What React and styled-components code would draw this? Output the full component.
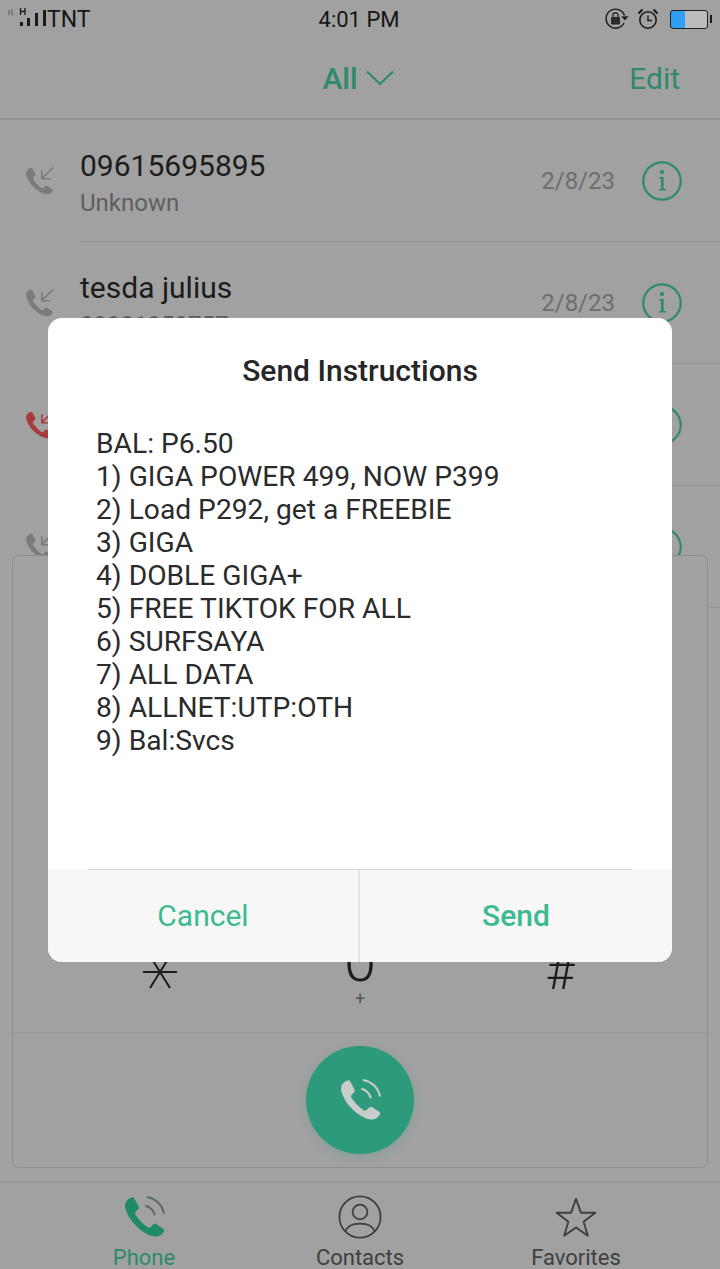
import React from "react";
import styled, { createGlobalStyle } from "styled-components";

const dimGreen = "#2d8a6c";
const GlobalStyle = createGlobalStyle`
  html, body { margin: 0; padding: 0; background: #a1a1a1; }
  * { box-sizing: border-box; }
`;

const Screen = styled.div`
  width: 720px;
  height: 1269px;
  position: relative;
  overflow: hidden;
  background: #a1a1a1;
  font-family: Roboto, "Liberation Sans", sans-serif;
  color: #1c1c1c;
  display: flex;
  flex-direction: column;
`;

// status bar
const StatusBar = styled.div`
  height: 38px;
  padding: 0 12px 0 8px;
  display: grid;
  grid-template-columns: 1fr auto 1fr;
  align-items: center;
`;
const Carrier = styled.div`
  display: flex;
  align-items: center;
  font-size: 23px;
  color: #151515;
  gap: 1px;
`;
const Clock = styled.div`
  font-size: 22px;
  color: #151515;
  padding-left: 2px;
`;
const StatusIcons = styled.div`
  display: flex;
  align-items: center;
  justify-content: flex-end;
  gap: 7px;
`;
const Battery = styled.div`
  width: 38px;
  height: 19px;
  margin-left: 4px;
  border: 1.5px solid #1e1e1e;
  border-radius: 3px;
  background: linear-gradient(to right, #2e9ff2 0 39%, #bcbcbc 39% 100%);
  position: relative;
  &::after {
    content: "";
    position: absolute;
    right: -5px;
    top: 4px;
    width: 2px;
    height: 8px;
    background: #1e1e1e;
  }
`;

// title bar
const Header = styled.header`
  height: 82px;
  border-bottom: 2px solid #909090;
  display: grid;
  grid-template-columns: 1fr auto 1fr;
  align-items: center;
  padding: 0 40px;
  color: ${dimGreen};
`;
const FilterTitle = styled.div`
  grid-column: 2;
  display: flex;
  align-items: center;
  gap: 8px;
  font-size: 30px;
  font-weight: 500;
  margin-right: 4px;
`;
const EditLink = styled.div`
  font-size: 30px;
  text-align: right;
`;

// call log
const CallRow = styled.div`
  height: 122px;
  flex: none;
  display: grid;
  grid-template-columns: 80px 1fr auto;
  align-items: center;
  position: relative;
  &::after {
    content: "";
    position: absolute;
    left: 80px;
    right: 0;
    bottom: 0;
    height: 1px;
    background: #929292;
  }
`;
const CallIcon = styled.div`
  padding-left: 22px;
  display: flex;
`;
const CallText = styled.div`
  display: flex;
  flex-direction: column;
  gap: 4px;
  padding-top: 3px;
`;
const CallName = styled.div`
  font-size: 30px;
  line-height: 36px;
  color: #1c1c1c;
`;
const CallSub = styled.div`
  font-size: 24px;
  line-height: 30px;
  color: #5f5f5f;
`;
const CallSide = styled.div`
  display: flex;
  align-items: center;
  gap: 27px;
  padding-right: 38px;
  font-size: 24px;
  color: #6e6e6e;
`;

// dial pad, lies over the log
const DialPanel = styled.div`
  position: absolute;
  left: 12px;
  right: 12px;
  top: 555px;
  height: 613px;
  border: 1px solid #8e8e8e;
  border-radius: 7px;
  background: #a1a1a1;
  display: flex;
  flex-direction: column;
`;
const KeyGrid = styled.div`
  height: 477px;
  display: grid;
  grid-template-columns: repeat(3, 200px);
  grid-template-rows: 119px;
  align-content: end;
  padding: 0 47px;
  border-bottom: 1px solid #999;
`;
const Key = styled.div`
  display: flex;
  flex-direction: column;
  align-items: center;
  justify-content: flex-end;
  height: 100%;
  padding-bottom: ${(p) => p.$pad || 24}px;
  font-size: ${(p) => p.$size || 58}px;
  font-weight: 300;
  line-height: ${(p) => p.$size || 58}px;
  color: #1c1c1c;
`;
const KeySub = styled.span`
  font-size: 18px;
  line-height: 18px;
  font-weight: 400;
  color: #555;
`;
const CallArea = styled.div`
  flex: 1;
  display: flex;
  align-items: center;
  justify-content: center;
`;
const CallButton = styled.div`
  width: 108px;
  height: 108px;
  border-radius: 50%;
  background: #2c9a7b;
  box-shadow: 0 3px 8px rgba(46, 156, 126, 0.25);
  display: flex;
  align-items: center;
  justify-content: center;
`;

// bottom tabs
const TabBar = styled.nav`
  position: absolute;
  left: 0;
  right: 0;
  bottom: 0;
  height: 88px;
  border-top: 2px solid #979797;
  padding: 0 36px;
  display: grid;
  grid-template-columns: repeat(3, 216px);
  background: #a1a1a1;
`;
const Tab = styled.div`
  display: flex;
  flex-direction: column;
  align-items: center;
  padding-top: 11px;
  color: ${(p) => (p.$active ? dimGreen : "#3f3f3f")};
  font-size: 22px;
  line-height: 26px;
`;
const TabIcon = styled.div`
  height: 46px;
  margin-bottom: 5px;
  display: flex;
  align-items: center;
`;

// dialog
const Scrim = styled.div`
  position: absolute;
  inset: 0;
  padding-top: 318px;
  display: flex;
  justify-content: center;
  align-items: flex-start;
`;
const Dialog = styled.div`
  width: 624px;
  height: 644px;
  border-radius: 14px;
  overflow: hidden;
  background: #fff;
  display: flex;
  flex-direction: column;
`;
const DialogTitle = styled.h2`
  margin: 0;
  padding-top: 33px;
  font-size: 30px;
  line-height: 40px;
  font-weight: 500;
  text-align: center;
  color: #262626;
`;
const DialogBody = styled.div`
  flex: 1;
  padding: 36px 48px 0;
  font-size: 28.2px;
  line-height: 33px;
  color: #2b2b2b;
`;
const DialogFooter = styled.footer`
  height: 93px;
  display: grid;
  grid-template-columns: 1fr 1fr;
  background: #f7f7f7;
  position: relative;
  &::before {
    content: "";
    position: absolute;
    left: 40px;
    right: 40px;
    top: 0;
    height: 1px;
    background: #d6d6d6;
  }
`;
const DialogButton = styled.div`
  display: flex;
  align-items: center;
  justify-content: center;
  font-size: 30px;
  color: #3dba90;
  font-weight: ${(p) => (p.$primary ? 500 : 400)};
  &:first-child {
    border-right: 2px solid #e4e4e4;
  }
`;

const handset =
  "M6.2 2.6C5 2.9 3.4 4 3 5.6 2.5 8 4.6 12.4 7.6 15.6c3 3.3 7.4 6 10.4 5.8 1.6-.1 3-1.4 3.6-2.6.2-.5 0-.9-.4-1.2l-3.4-2.2c-.5-.3-1-.2-1.4.2l-1.2 1.2c-.4.4-.9.4-1.4.1-2.2-1.4-4.6-3.9-5.9-6.1-.3-.5-.2-1 .2-1.4l1.1-1.1c.4-.4.4-.9.2-1.3l-2-3.8c-.3-.5-.7-.7-1.2-.6z";

function IncomingIcon({ color = "#7b7b7b" }) {
  return (
    <svg width="34" height="34" viewBox="0 0 24 24">
      <path d={handset} fill={color} />
      <path d="M22 2.4l-7.6 7.4M14 4.4v6h6.2" fill="none" stroke={color} strokeWidth="1.1" />
    </svg>
  );
}

function WavePhone({ size, color, wave = color }) {
  return (
    <svg width={size} height={size} viewBox="0 0 24 24">
      <path d={handset} fill={color} />
      <path d="M12.6 6.6c2.2.5 4 2.2 4.6 4.6M13.4 2.4c4.2.7 7.4 3.8 8.2 8" fill="none" stroke={wave} strokeWidth="1" />
    </svg>
  );
}

function InfoIcon() {
  return (
    <svg width="40" height="40" viewBox="0 0 40 40">
      <circle cx="20" cy="20" r="18.7" fill="none" stroke={dimGreen} strokeWidth="2.2" />
      <circle cx="20" cy="11" r="2.1" fill={dimGreen} />
      <path d="M17 16h4.6v12H24v1.6h-7V28h2V17.6h-2z" fill={dimGreen} />
    </svg>
  );
}

function SignalIcon() {
  return (
    <svg width="38" height="24" viewBox="0 0 38 24">
      <path d="M1 3v5M4 2.5v6" stroke="#6f6f6f" strokeWidth="1.5" />
      <path d="M12.5 1v7M12.5 4.5h4.5M17 1v7" stroke="#1a1a1a" strokeWidth="1.3" fill="none" />
      <rect x="12" y="15" width="3" height="4" fill="#1a1a1a" />
      <rect x="19" y="11" width="3" height="8" fill="#1a1a1a" />
      <rect x="27" y="6" width="3" height="13" fill="#1a1a1a" />
      <rect x="35" y="3" width="3" height="16" fill="#1a1a1a" />
    </svg>
  );
}

function LockRotateIcon() {
  return (
    <svg width="25" height="22" viewBox="0 0 25 22">
      <path d="M19.5 7.5A9.5 9.5 0 1 0 19 15" fill="none" stroke="#1a1a1a" strokeWidth="1.4" />
      <path d="M16 8.5l7.5-.2-3.5 4z" fill="#1a1a1a" />
      <rect x="6" y="9" width="9" height="7.5" rx="1" fill="#2a2a2a" />
      <path d="M8 9V7.2a2.5 2.5 0 0 1 5 0V9" fill="none" stroke="#2a2a2a" strokeWidth="1.4" />
    </svg>
  );
}

function AlarmIcon() {
  return (
    <svg width="22" height="22" viewBox="0 0 22 22">
      <circle cx="11" cy="12" r="8.2" fill="none" stroke="#1a1a1a" strokeWidth="1.6" />
      <path d="M11 7.5V12.5H15" fill="none" stroke="#1a1a1a" strokeWidth="1.4" />
      <path d="M1.5 5.5L5.5 1.5 M16.5 1.5L20.5 5.5" stroke="#1a1a1a" strokeWidth="2.2" />
    </svg>
  );
}

function AsteriskIcon() {
  return (
    <svg width="34" height="34" viewBox="0 0 34 34">
      <path d="M0 17h34M7 1l20 32M27 1L7 33" fill="none" stroke="#1c1c1c" strokeWidth="2" />
    </svg>
  );
}

function ContactIcon() {
  return (
    <svg width="44" height="44" viewBox="0 0 44 44" fill="none" stroke="#3f3f3f" strokeWidth="1.8">
      <circle cx="22" cy="22" r="20.6" />
      <circle cx="22" cy="17" r="7.4" />
      <path d="M7.6 36.6C9 31 15 28.6 22 28.6s13 2.4 14.4 8" />
    </svg>
  );
}

function StarIcon() {
  return (
    <svg width="42" height="40" viewBox="0 0 44 42">
      <path
        d="M22 2l5.3 14.6h15L30 26l4.4 14.6L22 32 9.6 40.6 14 26 1.7 16.6h15z"
        fill="none"
        stroke="#3f3f3f"
        strokeWidth="2"
        strokeLinejoin="round"
      />
    </svg>
  );
}

// rows 3 and 4 sit behind the dialog, only their icons show
const calls = [
  { name: "09615695895", sub: "Unknown", date: "2/8/23" },
  { name: "tesda julius", sub: "09981959757", date: "2/8/23" },
  { missed: true },
  {},
];

const instructions = [
  "BAL: P6.50",
  "1) GIGA POWER 499, NOW P399",
  "2) Load P292, get a FREEBIE",
  "3) GIGA",
  "4) DOBLE GIGA+",
  "5) FREE TIKTOK FOR ALL",
  "6) SURFSAYA",
  "7) ALL DATA",
  "8) ALLNET:UTP:OTH",
  "9) Bal:Svcs",
];

export default function App() {
  return (
    <Screen>
      <GlobalStyle />
      <StatusBar>
        <Carrier>
          <SignalIcon />
          TNT
        </Carrier>
        <Clock>4:01 PM</Clock>
        <StatusIcons>
          <LockRotateIcon />
          <AlarmIcon />
          <Battery />
        </StatusIcons>
      </StatusBar>

      <Header>
        <FilterTitle>
          All
          <svg width="28" height="16" viewBox="0 0 28 16">
            <path d="M1 1.5L14 14 27 1.5" fill="none" stroke={dimGreen} strokeWidth="2" />
          </svg>
        </FilterTitle>
        <EditLink>Edit</EditLink>
      </Header>

      {calls.map((c, i) => (
        <CallRow key={i}>
          <CallIcon>
            <IncomingIcon color={c.missed ? "#a83c3c" : "#7b7b7b"} />
          </CallIcon>
          <CallText>
            {c.name && <CallName>{c.name}</CallName>}
            {c.sub && <CallSub>{c.sub}</CallSub>}
          </CallText>
          <CallSide>
            {c.date}
            <InfoIcon />
          </CallSide>
        </CallRow>
      ))}

      <DialPanel>
        <KeyGrid>
          <Key $pad={43}>
            <AsteriskIcon />
          </Key>
          <Key>
            0<KeySub>+</KeySub>
          </Key>
          <Key $size={50} $pad={35}>
            #
          </Key>
        </KeyGrid>
        <CallArea>
          <CallButton>
            <WavePhone size={50} color="#c8cdca" />
          </CallButton>
        </CallArea>
      </DialPanel>

      <TabBar>
        <Tab $active>
          <TabIcon>
            <WavePhone size={50} color="#1f8a66" wave="#5a6a64" />
          </TabIcon>
          Phone
        </Tab>
        <Tab>
          <TabIcon>
            <ContactIcon />
          </TabIcon>
          Contacts
        </Tab>
        <Tab>
          <TabIcon>
            <StarIcon />
          </TabIcon>
          Favorites
        </Tab>
      </TabBar>

      <Scrim>
        <Dialog>
          <DialogTitle>Send Instructions</DialogTitle>
          <DialogBody>
            {instructions.map((line) => (
              <div key={line}>{line}</div>
            ))}
          </DialogBody>
          <DialogFooter>
            <DialogButton>Cancel</DialogButton>
            <DialogButton $primary>Send</DialogButton>
          </DialogFooter>
        </Dialog>
      </Scrim>
    </Screen>
  );
}
